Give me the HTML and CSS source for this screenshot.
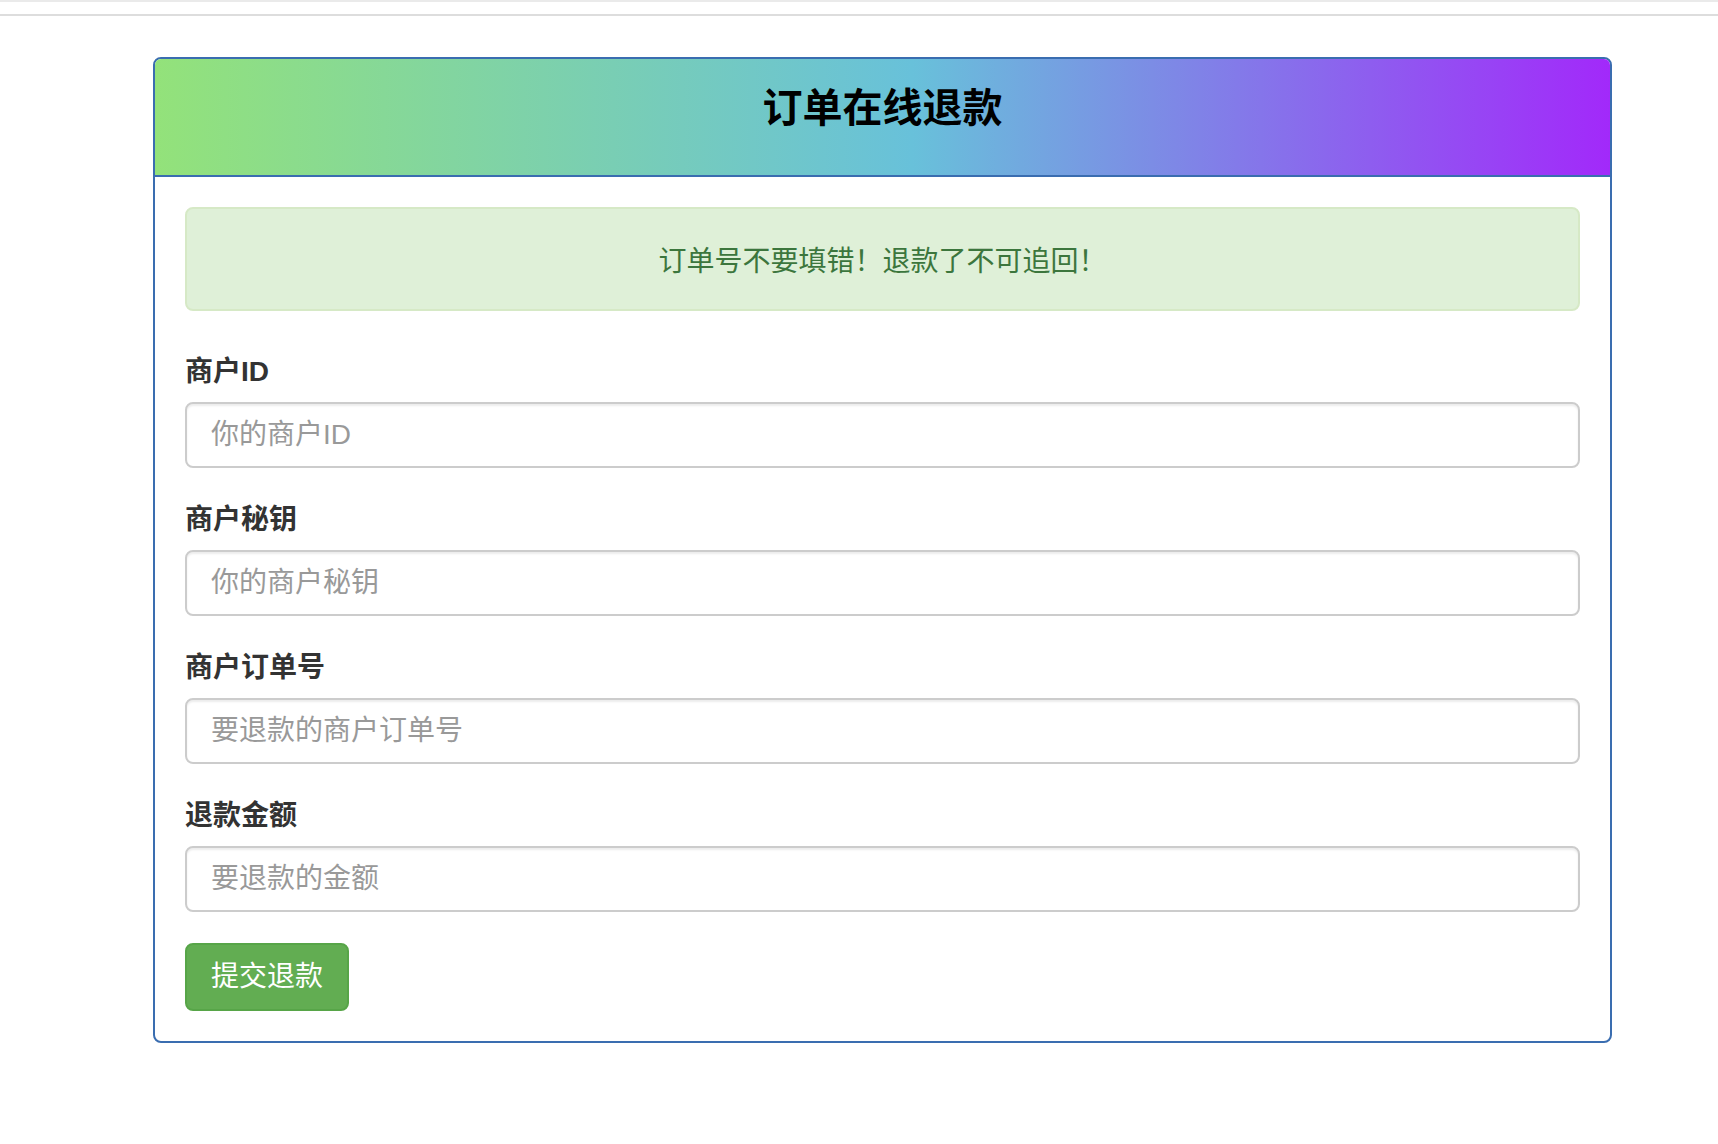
FILE: index.html
```html
<!DOCTYPE html>
<html lang="zh-CN">
<head>
  <meta charset="UTF-8">
  <meta name="viewport" content="width=device-width, initial-scale=1.0">
  <title>订单在线退款</title>
  <link rel="stylesheet" href="styles.css">
</head>
<body>
  <div class="topbar"></div>

  <div class="page">
    <div class="panel">
      <div class="panel-heading">
        <h3 class="panel-title">订单在线退款</h3>
      </div>

      <div class="panel-body">
        <div class="alert">订单号不要填错！退款了不可追回！</div>

        <form id="refundForm">
          <div class="form-group">
            <label for="pid">商户ID</label>
            <input type="text" id="pid" class="form-control" placeholder="你的商户ID">
          </div>

          <div class="form-group">
            <label for="key">商户秘钥</label>
            <input type="text" id="key" class="form-control" placeholder="你的商户秘钥">
          </div>

          <div class="form-group">
            <label for="trade">商户订单号</label>
            <input type="text" id="trade" class="form-control" placeholder="要退款的商户订单号">
          </div>

          <div class="form-group">
            <label for="money">退款金额</label>
            <input type="text" id="money" class="form-control" placeholder="要退款的金额">
          </div>

          <button type="submit" class="btn btn-success">提交退款</button>
        </form>
      </div>
    </div>
  </div>
</body>
</html>
```

FILE: styles.css
```css
* {
  box-sizing: border-box;
}
body {
  margin: 0;
  font-family: "Liberation Sans", "Noto Sans CJK SC", sans-serif;
  font-size: 28px;
  line-height: 1.42857;
  color: #333;
  background: #fff;
}
.topbar {
  height: 16px;
  border-top: 2px solid #eaeaea;
  border-bottom: 2px solid #dddddd;
}
.page {
  padding: 41px 0 60px 153px;
}
.panel {
  width: 1459px;
  border: 2px solid #3a6db0;
  border-radius: 8px;
  overflow: hidden;
  background: #fff;
}
.panel-heading {
  height: 118px;
  padding: 25px 30px 0;
  border-bottom: 2px solid #3a6db0;
  background: linear-gradient(to right, #93e27a, #68c1da 52%, #a229fa);
  text-align: center;
}
.panel-title {
  margin: 0;
  font-size: 40px;
  line-height: 48px;
  font-weight: bold;
  color: #000;
}
.panel-body {
  padding: 30px 30px 30px;
}
.alert {
  margin-bottom: 41px;
  padding: 33px 30px 27px;
  border: 2px solid #d6e9c6;
  border-radius: 8px;
  background: #dff0d8;
  color: #3c763d;
  text-align: center;
  line-height: 40px;
}
.form-group {
  margin-bottom: 32px;
}
label {
  display: block;
  margin-bottom: 10px;
  font-weight: bold;
  line-height: 40px;
}
.form-control {
  display: block;
  width: 100%;
  height: 66px;
  padding: 12px 24px;
  border: 2px solid #cccccc;
  border-radius: 8px;
  font-family: inherit;
  font-size: 28px;
  color: #555;
  box-shadow: inset 0 2px 2px rgba(0, 0, 0, 0.075);
}
.form-control::placeholder {
  color: #999;
}
.btn {
  display: inline-block;
  height: 68px;
  padding: 12px 24px;
  border: 2px solid transparent;
  border-radius: 8px;
  font-family: inherit;
  font-size: 28px;
  line-height: 40px;
  cursor: pointer;
}
.btn-success {
  margin-top: -1px;
  background-color: #62ad52;
  border-color: #57a548;
  color: #fff;
}
.btn-success:hover {
  background-color: #4f9a42;
}
```
